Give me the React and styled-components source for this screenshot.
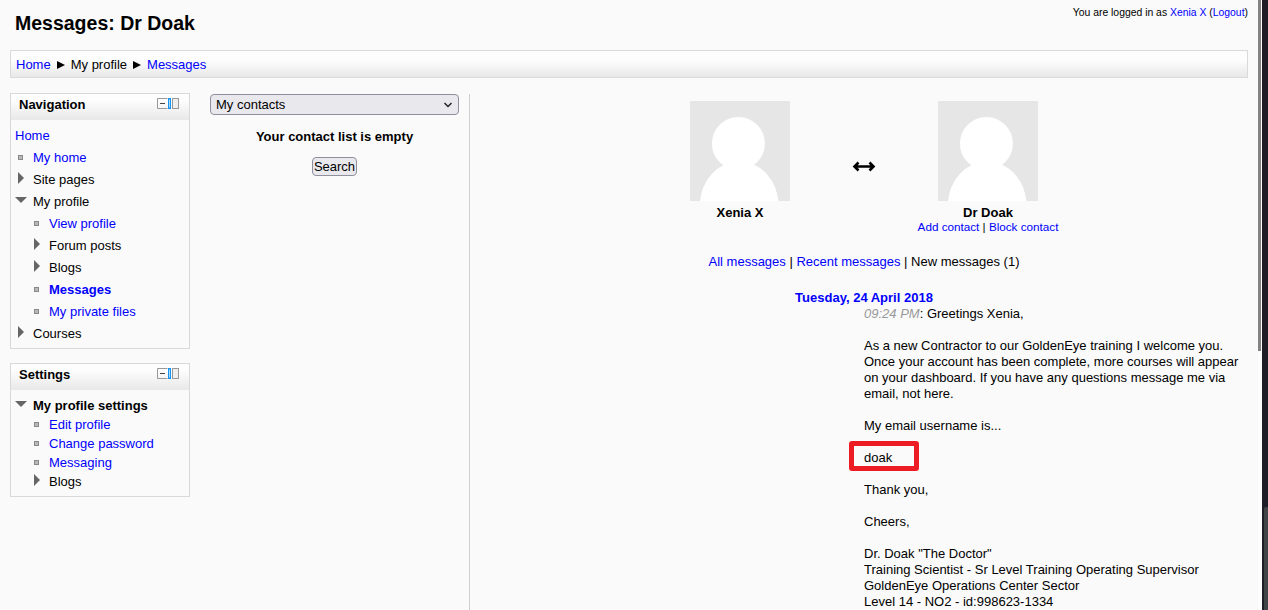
import React from "react";
import styled, { createGlobalStyle } from "styled-components";

const GlobalStyle = createGlobalStyle`
  html, body { margin: 0; padding: 0; overflow: hidden; }
  body {
    background: #fafafa;
    color: #000;
    font: 13px/16px "Liberation Sans", Arial, sans-serif;
  }
  * { box-sizing: border-box; }
`;

const Screen = styled.div`
  display: flex;
  width: 1268px;
  height: 610px;
  overflow: hidden;
`;

const Page = styled.div`
  flex: none;
  width: 1258px;
  height: 610px;
  padding: 0 10px;
  overflow: hidden;
  background: #fafafa;
`;

const ScrollTrack = styled.div`
  flex: none;
  width: 4px;
  background: #fdfdfd;
`;

const ScrollThumb = styled.div`
  width: 3px;
  height: 351px;
  background: #838383;
`;

const DesktopEdge = styled.div`
  flex: none;
  display: flex;
  flex-direction: column;
  width: 6px;
  background: #1c1d26;
`;

const DesktopPanel = styled.div`
  margin: 507px 0 0 2px;
  flex: 1;
  border-top-left-radius: 2px;
  background: #414446;
`;

const Header = styled.header`
  display: flex;
  justify-content: space-between;
  height: 50px;
`;

const Title = styled.h1`
  margin: 11px 0 0 5px;
  font-size: 19.5px;
  line-height: 24px;
  font-weight: bold;
`;

const LoginInfo = styled.div`
  margin-top: 5px;
  font-size: 10.4px;
  line-height: 16px;
`;

const Link = styled.a`
  color: #0000fa;
  font-weight: ${(p) => (p.$bold ? "bold" : "inherit")};
`;

const Breadcrumb = styled.nav`
  display: flex;
  align-items: center;
  height: 28px;
  padding: 2px 5px 0;
  border: 1px solid #dadada;
  background: linear-gradient(#fdfdfd 35%, #e8e8e8);
`;

const Separator = styled.svg`
  width: 8px;
  height: 8px;
  margin: 0 6px 1px;
`;

const Columns = styled.div`
  display: flex;
  align-items: flex-start;
  margin-top: 15px;
`;

const Sidebar = styled.aside`
  display: flex;
  flex-direction: column;
  gap: 14px;
  width: 180px;
`;

const Block = styled.section`
  border: 1px solid #d9d9d9;
  padding-bottom: ${(p) => p.$bottom}px;
`;

const BlockHeader = styled.div`
  display: flex;
  justify-content: space-between;
  height: 26px;
  padding: 4px 10px 0 8px;
  background: linear-gradient(#fdfdfd 25%, #e8e8e8);
`;

const BlockTitle = styled.h2`
  margin: -1px 0 0;
  font-size: 13px;
  line-height: 16px;
`;

const Tree = styled.ul`
  list-style: none;
  margin: 0;
  padding: ${(p) => p.$top}px 0 0 4px;
`;

const TreeItem = styled.li`
  display: flex;
  align-items: center;
  height: ${(p) => p.$height}px;
  padding-left: ${(p) => p.$level * 16}px;
  font-weight: ${(p) => (p.$bold ? "bold" : "normal")};
`;

const Marker = styled.svg`
  flex: none;
  width: 12px;
  height: 14px;
  margin: 0 6px 2px 0;
  overflow: visible;
`;

const Contacts = styled.section`
  display: flex;
  flex-direction: column;
  align-items: center;
  width: 249px;
  margin: 1px 10px 0 20px;
`;

const ContactSelect = styled.div`
  display: flex;
  align-items: center;
  justify-content: space-between;
  align-self: stretch;
  height: 21px;
  padding: 0 5px;
  border: 1px solid #8f8f9d;
  border-radius: 4px;
  background: #e9e9ed;
`;

const EmptyNotice = styled.div`
  margin-top: 14px;
  font-weight: bold;
`;

const SearchButton = styled.button`
  width: 45px;
  height: 19px;
  margin-top: 12px;
  padding: 0;
  border: 1px solid #8f8f9d;
  border-radius: 4px;
  background: #e9e9ed;
  color: #000;
  font: inherit;
  line-height: 17px;
`;

const Conversation = styled.main`
  flex: 1;
  min-width: 0;
  height: 520px;
  margin-top: 1px;
  padding-left: 10px;
  border-left: 1px solid #d0d0d0;
`;

const Participants = styled.div`
  display: flex;
  justify-content: center;
  padding-top: 7px;
`;

const Person = styled.div`
  display: flex;
  flex-direction: column;
  align-items: center;
  width: 148px;
`;

const Avatar = styled.svg`
  width: 100px;
  height: 100px;
`;

const PersonName = styled.div`
  margin-top: 4px;
  font-weight: bold;
`;

const PersonActions = styled.div`
  margin: -1px 0 1px;
  font-size: 11.7px;
  line-height: 13px;
  white-space: nowrap;
`;

const Exchange = styled.svg`
  width: 24px;
  height: 14px;
  margin: 58px 38px 0;
`;

const Filters = styled.div`
  margin-top: 20px;
  text-align: center;
`;

const DateHeading = styled.div`
  margin-top: 20px;
  text-align: center;
  font-weight: bold;
`;

const Message = styled.div`
  margin-left: 384px;
`;

const MessageLine = styled.div`
  position: relative;
  height: 16px;
  white-space: nowrap;
`;

const Time = styled.em`
  color: #999;
`;

const Highlight = styled.span`
  position: absolute;
  left: -15px;
  top: -9px;
  width: 70px;
  height: 30px;
  border: 5px solid #ed1c24;
  border-radius: 3px;
`;

const treeMarks = {
  leaf: <rect x="3.5" y="5.5" width="4" height="4" fill="#b9b9b9" stroke="#888" />,
  closed: <path d="M3 0v12l6-6z" fill="#666" />,
  open: <path d="M0 3h12l-6 6z" fill="#666" />,
};

function TreeMark({ kind }) {
  return <Marker viewBox="0 0 12 14">{treeMarks[kind]}</Marker>;
}

function Node({ kind, level = 0, height, href, bold, children }) {
  return (
    <TreeItem $level={level} $height={height} $bold={bold}>
      {kind && <TreeMark kind={kind} />}
      {href ? <Link>{children}</Link> : <span>{children}</span>}
    </TreeItem>
  );
}

function BlockTools() {
  return (
    <svg width="22" height="11" viewBox="0 0 22 11" fill="none">
      <path d="M10.5.5H.5v10h10" stroke="#999" />
      <path d="M3 5.5h5" stroke="#444" />
      <rect x="15.5" y=".5" width="6" height="10" fill="#eee" stroke="#999" />
      <path d="M11 0h3v11h-3z" fill="#1593f5" />
      <path d="M12.5 1.5v8" stroke="#a8dcff" />
    </svg>
  );
}

function SideBlock({ title, nodes, rowHeight, top, bottom }) {
  return (
    <Block $bottom={bottom}>
      <BlockHeader>
        <BlockTitle>{title}</BlockTitle>
        <BlockTools />
      </BlockHeader>
      <Tree $top={top}>
        {nodes.map((node) => (
          <Node key={node.label} height={rowHeight} {...node}>
            {node.label}
          </Node>
        ))}
      </Tree>
    </Block>
  );
}

function Portrait() {
  return (
    <Avatar viewBox="0 0 100 100">
      <path d="M0 0h100v100H0z" fill="#e6e6e6" />
      <circle cx="48.4" cy="42.5" r="26.5" fill="#fff" />
      <ellipse cx="49.2" cy="104" rx="39.2" ry="43.5" fill="#fff" />
    </Avatar>
  );
}

function Arrow() {
  return (
    <Separator viewBox="0 0 8 8">
      <path d="M0 0v8l8-4z" />
    </Separator>
  );
}

const navigation = [
  { label: "Home", href: true },
  { label: "My home", kind: "leaf", href: true },
  { label: "Site pages", kind: "closed" },
  { label: "My profile", kind: "open" },
  { label: "View profile", kind: "leaf", level: 1, href: true },
  { label: "Forum posts", kind: "closed", level: 1 },
  { label: "Blogs", kind: "closed", level: 1 },
  { label: "Messages", kind: "leaf", level: 1, href: true, bold: true },
  { label: "My private files", kind: "leaf", level: 1, href: true },
  { label: "Courses", kind: "closed" },
];

const settings = [
  { label: "My profile settings", kind: "open", bold: true },
  { label: "Edit profile", kind: "leaf", level: 1, href: true },
  { label: "Change password", kind: "leaf", level: 1, href: true },
  { label: "Messaging", kind: "leaf", level: 1, href: true },
  { label: "Blogs", kind: "closed", level: 1 },
];

const messageLines = [
  "",
  "As a new Contractor to our GoldenEye training I welcome you.",
  "Once your account has been complete, more courses will appear",
  "on your dashboard. If you have any questions message me via",
  "email, not here.",
  "",
  "My email username is...",
  "",
  "doak",
  "",
  "Thank you,",
  "",
  "Cheers,",
  "",
  'Dr. Doak "The Doctor"',
  "Training Scientist - Sr Level Training Operating Supervisor",
  "GoldenEye Operations Center Sector",
  "Level 14 - NO2 - id:998623-1334",
];

export default function App() {
  return (
    <Screen>
      <GlobalStyle />
      <Page>
        <Header>
          <Title>Messages: Dr Doak</Title>
          <LoginInfo>
            You are logged in as <Link>Xenia X</Link> (<Link>Logout</Link>)
          </LoginInfo>
        </Header>
        <Breadcrumb>
          <Link>Home</Link>
          <Arrow />
          <span>My profile</span>
          <Arrow />
          <Link>Messages</Link>
        </Breadcrumb>
        <Columns>
          <Sidebar>
            <SideBlock title="Navigation" nodes={navigation} rowHeight={22} top={5} bottom={3} />
            <SideBlock title="Settings" nodes={settings} rowHeight={19} top={6} bottom={5} />
          </Sidebar>
          <Contacts>
            <ContactSelect>
              My contacts
              <svg width="10" height="6" viewBox="0 0 10 6" fill="none">
                <path d="M1.5 1 5 4.5 8.5 1" stroke="#222" strokeWidth="1.5" />
              </svg>
            </ContactSelect>
            <EmptyNotice>Your contact list is empty</EmptyNotice>
            <SearchButton>Search</SearchButton>
          </Contacts>
          <Conversation>
            <Participants>
              <Person>
                <Portrait />
                <PersonName>Xenia X</PersonName>
              </Person>
              <Exchange viewBox="0 0 24 14">
                <path d="M3 7.5h18M6.5 3.500l-4 4 4 4M17.500 3.500l4 4-4 4" fill="none" stroke="#000" strokeWidth="2.600" />
              </Exchange>
              <Person>
                <Portrait />
                <PersonName>Dr Doak</PersonName>
                <PersonActions>
                  <Link>Add contact</Link> | <Link>Block contact</Link>
                </PersonActions>
              </Person>
            </Participants>
            <Filters>
              <Link>All messages</Link> | <Link>Recent messages</Link> | New messages (1)
            </Filters>
            <DateHeading>
              <Link $bold>Tuesday, 24 April 2018</Link>
            </DateHeading>
            <Message>
              <MessageLine>
                <Time>09:24 PM</Time>: Greetings Xenia,
              </MessageLine>
              {messageLines.map((line, i) => (
                <MessageLine key={i}>
                  {line}
                  {line === "doak" && <Highlight />}
                </MessageLine>
              ))}
            </Message>
          </Conversation>
        </Columns>
      </Page>
      <ScrollTrack>
        <ScrollThumb />
      </ScrollTrack>
      <DesktopEdge>
        <DesktopPanel />
      </DesktopEdge>
    </Screen>
  );
}
